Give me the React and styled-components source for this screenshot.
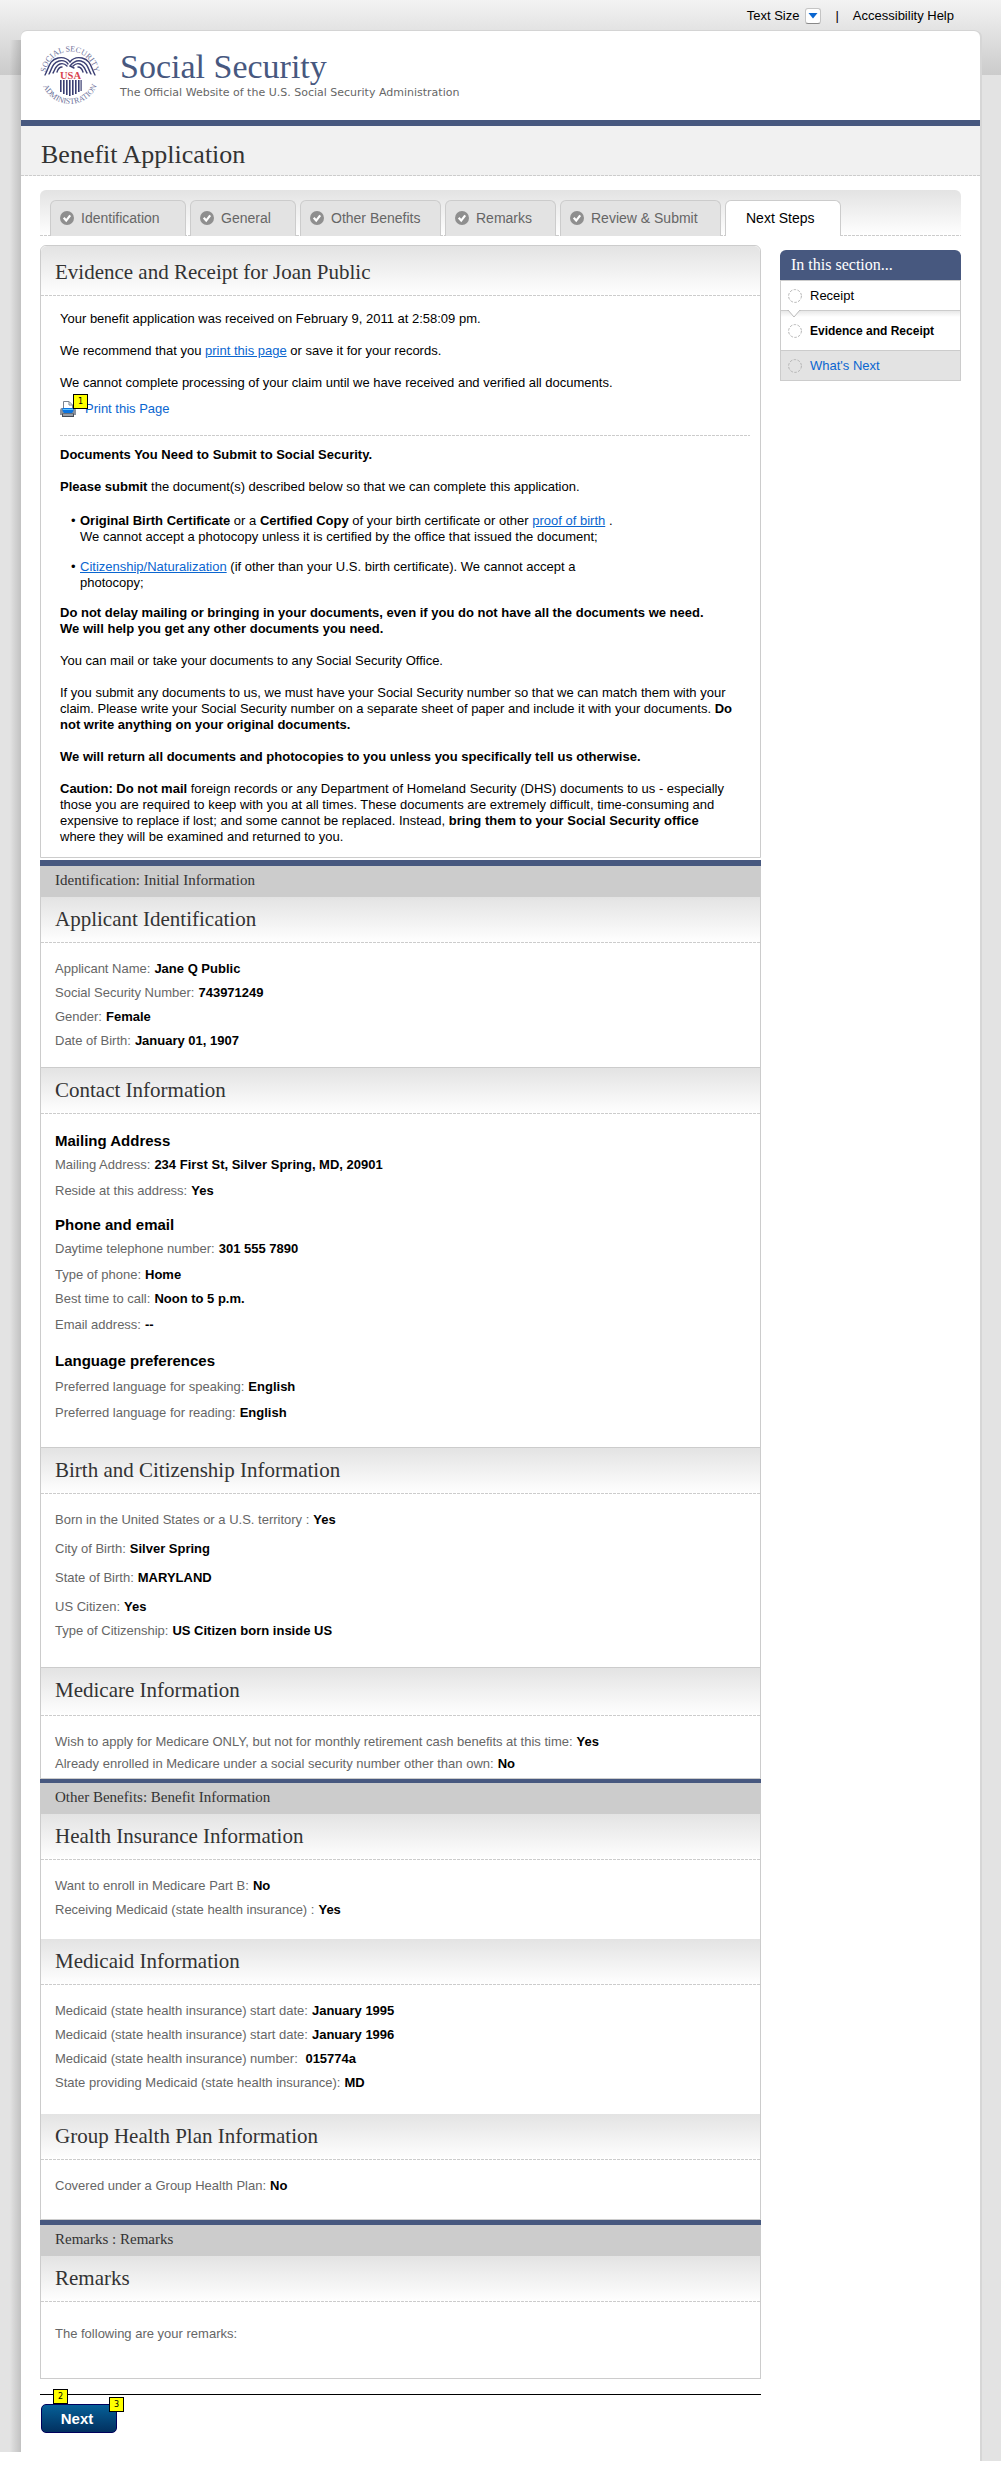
import React from "react";
import styled, { createGlobalStyle } from "styled-components";

const sans = `"Liberation Sans", Arial, sans-serif`;
const serif = `Georgia, "Liberation Serif", serif`;
const navy = "#47587f";
const line = "#cccccc";
const dashes = `repeating-linear-gradient(to right, ${line} 0 3px, transparent 3px 4px)`;

const Global = createGlobalStyle`
  * { box-sizing: border-box; }
  body { margin: 0; background: #fff; color: #000; font: 13px/16px ${sans}; }
  h1, h2, h3, h4, p, ul, dl, dd { margin: 0; padding: 0; font-weight: normal; }
  a { color: #0a66d0; }
`;

const Page = styled.div`
  margin-right: 7px;
  background: linear-gradient(#f3f3f3, #cbcbcb) top / 100% 75px no-repeat, #e3e3e3;
`;

const TopBar = styled.nav`
  display: flex;
  justify-content: flex-end;
  align-items: center;
  height: 31px;
  padding-right: 47px;
`;

const TopLink = styled.a`
  color: #000;
  text-decoration: none;
`;

const SizeButton = styled.button`
  display: grid;
  place-items: center;
  width: 16px;
  height: 16px;
  margin-left: 6px;
  padding: 0;
  border: 1px solid #c4c4c4;
  border-bottom-color: #888;
  border-radius: 3px;
  background: #fff;
`;

const Divider = styled.span`
  margin: 0 14px;
`;

const Frame = styled.div`
  display: grid;
  grid-template-columns: 21px minmax(0, 1fr) 21px;
`;

const LeftEdge = styled.div`
  display: flex;
  flex-direction: column;
  padding-top: 9px;
`;

const Shade = styled.div`
  flex: 1;
  background: linear-gradient(to right, transparent 10px, rgba(0, 0, 0, 0.03) 12px, rgba(0, 0, 0, 0.15));
`;

const LeftFoot = styled.div`
  height: 9px;
  background: #fff;
`;

const Card = styled.div`
  background: #fff;
  border-radius: 6px 6px 0 0;
  box-shadow: 0 -1px 0 #d4d4d4, 2px 0 0 #d6d6d6;
  padding-bottom: 28px;
`;

const Banner = styled.header`
  display: flex;
  align-items: flex-start;
  gap: 20px;
  height: 95px;
  padding: 13px 19px 0;
  border-bottom: 6px solid ${navy};
`;

const Brand = styled.div`
  padding-top: 5px;
`;

const BrandName = styled.div`
  color: ${navy};
  font: 34px/36px ${serif};
`;

const Tagline = styled.p`
  color: #666;
  font: 11px/16px Verdana, "DejaVu Sans", sans-serif;
`;

const TitleBand = styled.div`
  padding: 14px 19px 6px 20px;
  background: ${dashes} bottom / 100% 1px no-repeat, #f1f1f1;
`;

const PageTitle = styled.h1`
  color: #333;
  font: 26px/30px ${serif};
`;

const Content = styled.div`
  padding: 14px 19px 0;
`;

const Tabs = styled.nav`
  display: flex;
  gap: 4px;
  padding: 10px 10px 0;
  border-radius: 6px 6px 0 0;
  background: ${dashes} bottom / 100% 1px no-repeat, linear-gradient(#e3e3e3, #fff);
`;

const Tab = styled.a`
  display: flex;
  align-items: center;
  gap: 7px;
  flex: 0 1 ${(p) => p.$width}px;
  height: 36px;
  padding: 0 0 2px ${(p) => (p.$current ? 20 : 9)}px;
  border: 1px solid ${line};
  border-bottom: 0;
  border-radius: 6px 6px 0 0;
  background: ${(p) => (p.$current ? "#fff" : "#e3e3e3")};
  color: ${(p) => (p.$current ? "#000" : "#666")};
  font-size: 14px;
  text-decoration: none;
  white-space: nowrap;
`;

const Columns = styled.div`
  display: grid;
  grid-template-columns: minmax(0, 1fr) 181px;
  align-items: start;
  gap: 19px;
  padding-top: 9px;
`;

const Panel = styled.section`
  border: 1px solid ${line};
  border-width: ${(p) => (p.$first ? "1px" : p.$open ? "0 1px" : "0 1px 1px")};
  border-radius: ${(p) => (p.$first ? "6px 6px 0 0" : "0")};
  margin-bottom: ${(p) => (p.$first ? 2 : 0)}px;
`;

const PanelHead = styled.div`
  padding: ${(p) => p.$top || 10}px 14px ${(p) => p.$bottom || 12}px;
  border-radius: inherit;
  background: ${dashes} bottom / 100% 1px no-repeat, linear-gradient(#e3e3e3, #fff);
`;

const PanelTitle = styled.h2`
  color: #333;
  font: 21px/24px ${serif};
`;

const Stage = styled.div`
  padding: 6px 15px 9px;
  border-top: ${(p) => p.$bar}px solid ${navy};
  background: ${line};
  color: #333;
  font: 15px/16px ${serif};
`;

const Letter = styled.div`
  display: flex;
  flex-direction: column;
  gap: 16px;
  padding: 15px 10px 12px 19px;
`;

const PrintRow = styled.div`
  position: relative;
  display: flex;
  align-items: center;
  gap: 9px;
  margin-top: -6px;
  padding-bottom: 19px;
  background: ${dashes} bottom / 100% 1px no-repeat;

  & + * { margin-top: -5px; }
`;

const PlainLink = styled.a`
  text-decoration: none;
`;

const Bullets = styled.ul`
  display: flex;
  flex-direction: column;
  gap: 14px;
  margin: 2px 0 -2px;
  list-style: none;
`;

const Bullet = styled.li`
  display: flex;
  gap: 4px;
  padding-left: 11px;

  &::before { content: "•"; width: 5px; }
`;

const Fields = styled.dl`
  display: flex;
  flex-direction: column;
  padding: ${(p) => p.$top || 18}px 14px ${(p) => p.$bottom}px;
`;

const Field = styled.div`
  display: flex;
  gap: 4px;
  margin-bottom: ${(p) => p.$gap}px;

  dt { color: #666; }
  dd { font-weight: bold; }
`;

const SubHead = styled.h3`
  margin: 0 0 ${(p) => p.$gap}px;
  font: bold 15px/16px ${sans};
`;

const Side = styled.nav`
  margin-top: 5px;
`;

const SideHead = styled.h2`
  padding: 5px 11px;
  border-radius: 6px 6px 0 0;
  background: ${navy};
  color: #fff;
  font: 16px/20px ${serif};
`;

const SideItem = styled.a`
  position: relative;
  display: flex;
  align-items: center;
  gap: 8px;
  height: ${(p) => (p.$current ? 40 : 30)}px;
  padding-left: 7px;
  border: 1px solid ${line};
  border-bottom: 0;
  background: ${(p) =>
    p.$current ? "linear-gradient(#e8e8e8, #fff 6px)" : p.$later ? "#e3e3e3" : "#fff"};
  color: ${(p) => (p.$later ? "#0a66d0" : "#000")};
  font-weight: ${(p) => (p.$current ? "bold" : "normal")};
  font-size: ${(p) => (p.$current ? 12 : 13)}px;
  text-decoration: none;
  white-space: nowrap;

  &:last-child { height: 31px; border-bottom: 1px solid ${line}; }
`;

const Notch = styled.svg`
  position: absolute;
  top: -1px;
  left: 6px;
`;

const Actions = styled.div`
  margin-top: 15px;
  padding: 9px 1px 0;
  border-top: 1px solid #000;
`;

const NextWrap = styled.div`
  position: relative;
  display: inline-block;
`;

const NextButton = styled.button`
  display: block;
  width: 76px;
  height: 29px;
  padding: 0 4px 0 0;
  border: 1px solid #00005c;
  border-radius: 5px;
  background: linear-gradient(#066098, #02305f);
  color: #fff;
  font: bold 15px/24px ${sans};
`;

const Note = styled.span`
  position: absolute;
  top: ${(p) => p.$top}px;
  left: ${(p) => p.$left}px;
  width: 15px;
  height: 15px;
  border: 1px solid #000;
  background: #ff0;
  color: #000;
  font: 8px/13px "DejaVu Sans", sans-serif;
  text-align: center;
`;

const SealArt = styled.svg`
  overflow: visible;
`;

const Seal = () => (
  <SealArt width="60" height="61" viewBox="0 0 60 61" role="img" aria-label="Social Security Administration seal">
    <defs>
      <path id="sealTop" d="M5.400 32 A24.600 24.600 0 0 1 54.600 32" />
      <path id="sealBottom" d="M.700 30.500 A29.300 29.300 0 0 0 59.300 30.500" />
    </defs>
    <g fill="#6d7199" fontFamily='"Liberation Serif", serif' fontSize="8">
      <text><textPath href="#sealTop" startOffset="50%" textAnchor="middle">SOCIAL SECURITY</textPath></text>
      <text><textPath href="#sealBottom" startOffset="50%" textAnchor="middle">ADMINISTRATION</textPath></text>
    </g>
    <g fill="none" stroke="#3b3f73" strokeWidth="1.4" strokeLinecap="round">
      <path d="M5 31 C9 24 9 16 18 14 C23 13 27 14 30 18 C33 14 37 13 42 14 C51 16 51 24 55 31" />
      <path d="M9 30 C12 25 12 19 19 17 C23 16 26 17 28 20" />
      <path d="M13 29 C15 26 15 22 20 20 C23 19 25 20 27 22" />
      <path d="M17 28 C18 25 19 23 22 23" />
      <path d="M51 30 C48 25 48 19 41 17 C37 16 34 17 30 22 L34 24" />
      <path d="M47 29 C45 26 45 22 40 20 C37 19 35 20 33 22" />
      <path d="M43 28 C42 25 41 23 38 23" />
    </g>
    <text x="30.500" y="34.500" textAnchor="middle" fill="#d8434e" fontFamily='"Liberation Serif", serif' fontWeight="bold" fontSize="10.500">USA</text>
    <g fill="#3b3f73">
      {[20, 23, 26, 29, 32, 35, 38].map((x, i) => (
        <rect key={x} x={x} y="36" width="1.600" height={[12, 14, 15, 16, 15, 14, 12][i]} />
      ))}
      <rect x="40.500" y="36" width="1.200" height="11" />
    </g>
  </SealArt>
);

const Check = () => (
  <svg width="14" height="14" viewBox="0 0 14 14" aria-hidden="true">
    <circle cx="7" cy="7" r="7" fill="#8f8f8f" />
    <path d="M3.700 6.800 L6.200 9.600 L10.200 4.300" fill="none" stroke="#fff" strokeWidth="2.200" />
  </svg>
);

const Ring = () => (
  <svg width="14" height="14" viewBox="0 0 14 14" aria-hidden="true">
    <circle cx="7" cy="7" r="6.400" fill="none" stroke="#b4b4b4" strokeDasharray="2.600 1.400" />
  </svg>
);

const Printer = () => (
  <svg width="16" height="16" viewBox="0 0 16 16" aria-hidden="true">
    <path d="M3.500 8 V.500 H9 L12.500 4 V8 Z" fill="#fff" stroke="#7b8490" />
    <path d="M9 .500 V4 H12.500" fill="none" stroke="#7b8490" />
    <path d="M1 7 H15 L16 9 V14 H0 V9 Z" fill="#8a929e" />
    <path d="M2.500 7 H13.500 V10 L12 12 H4 L2.500 10 Z" fill="#0a74e0" />
    <path d="M3 8 H13 V9 H3 Z" fill="#5fc4ff" />
    <path d="M2 12.500 H14 V16 H2 Z" fill="#444c58" />
    <path d="M3 13.500 H13 V14.500 H3 Z" fill="#e8ecf2" />
  </svg>
);

const Head = ({ children, ...rest }) => (
  <PanelHead {...rest}>
    <PanelTitle>{children}</PanelTitle>
  </PanelHead>
);

const Rows = ({ items, gap = 8 }) =>
  items.map(([label, value, own], i) => (
    <Field key={label + value} $gap={i === items.length - 1 ? 0 : own ?? gap}>
      <dt>{label}</dt>
      <dd>{value}</dd>
    </Field>
  ));

const tabs = [
  ["Identification", 136],
  ["General", 106],
  ["Other Benefits", 141],
  ["Remarks", 111],
  ["Review & Submit", 161],
];

const contact = [
  ["Mailing Address", 8, 18, [
    ["Mailing Address:", "234 First St, Silver Spring, MD, 20901"],
    ["Reside at this address:", "Yes"],
  ]],
  ["Phone and email", 8, 20, [
    ["Daytime telephone number:", "301 555 7890"],
    ["Type of phone:", "Home", 8],
    ["Best time to call:", "Noon to 5 p.m."],
    ["Email address:", "--"],
  ]],
  ["Language preferences", 10, 0, [
    ["Preferred language for speaking:", "English"],
    ["Preferred language for reading:", "English"],
  ]],
];

const ContactGroup = styled.div`
  margin-bottom: ${(p) => p.$after}px;
`;

const ContactBody = styled.div`
  padding: 19px 14px 26px;
`;

export default function App() {
  return (
    <>
      <Global />
      <Page>
        <TopBar>
          <TopLink href="#size">Text Size</TopLink>
          <SizeButton type="button" aria-label="Change text size">
            <svg width="10" height="6" viewBox="0 0 10 6"><path d="M.500 0 H9.500 L5 5.500 Z" fill="#0a66d0" /></svg>
          </SizeButton>
          <Divider>|</Divider>
          <TopLink href="#help">Accessibility Help</TopLink>
        </TopBar>
        <Frame>
          <LeftEdge>
            <Shade />
            <LeftFoot />
          </LeftEdge>
          <Card>
            <Banner>
              <Seal />
              <Brand>
                <BrandName>Social Security</BrandName>
                <Tagline>The Official Website of the U.S. Social Security Administration</Tagline>
              </Brand>
            </Banner>
            <TitleBand>
              <PageTitle>Benefit Application</PageTitle>
            </TitleBand>
            <Content>
              <Tabs>
                {tabs.map(([name, width]) => (
                  <Tab key={name} href="#tab" $width={width}>
                    <Check />
                    {name}
                  </Tab>
                ))}
                <Tab href="#next-steps" $width={116} $current>Next Steps</Tab>
              </Tabs>
              <Columns>
                <main>
                  <Panel $first>
                    <Head $top={14}>Evidence and Receipt for Joan Public</Head>
                    <Letter>
                      <p>Your benefit application was received on February 9, 2011 at 2:58:09 pm.</p>
                      <p>We recommend that you <a href="#print">print this page</a> or save it for your records.</p>
                      <p>We cannot complete processing of your claim until we have received and verified all documents.</p>
                      <PrintRow>
                        <Printer />
                        <PlainLink href="#print">Print this Page</PlainLink>
                        <Note $top={-7} $left={13}>1</Note>
                      </PrintRow>
                      <p><b>Documents You Need to Submit to Social Security.</b></p>
                      <p><b>Please submit</b> the document(s) described below so that we can complete this application.</p>
                      <Bullets>
                        <Bullet>
                          <p>
                            <b>Original Birth Certificate</b> or a <b>Certified Copy</b> of your birth certificate or other{" "}
                            <a href="#proof">proof of birth</a> .<br />
                            We cannot accept a photocopy unless it is certified by the office that issued the document;
                          </p>
                        </Bullet>
                        <Bullet>
                          <p>
                            <a href="#citizenship">Citizenship/Naturalization</a> (if other than your U.S. birth certificate). We cannot accept a<br />
                            photocopy;
                          </p>
                        </Bullet>
                      </Bullets>
                      <p>
                        <b>
                          Do not delay mailing or bringing in your documents, even if you do not have all the documents we need.<br />
                          We will help you get any other documents you need.
                        </b>
                      </p>
                      <p>You can mail or take your documents to any Social Security Office.</p>
                      <p>
                        If you submit any documents to us, we must have your Social Security number so that we can match them with your<br />
                        claim. Please write your Social Security number on a separate sheet of paper and include it with your documents. <b>Do<br />
                        not write anything on your original documents.</b>
                      </p>
                      <p><b>We will return all documents and photocopies to you unless you specifically tell us otherwise.</b></p>
                      <p>
                        <b>Caution: Do not mail</b> foreign records or any Department of Homeland Security (DHS) documents to us - especially<br />
                        those you are required to keep with you at all times. These documents are extremely difficult, time-consuming and<br />
                        expensive to replace if lost; and some cannot be replaced. Instead, <b>bring them to your Social Security office</b><br />
                        where they will be examined and returned to you.
                      </p>
                    </Letter>
                  </Panel>

                  <Stage $bar={6}>Identification: Initial Information</Stage>
                  <Panel>
                    <Head>Applicant Identification</Head>
                    <Fields $bottom={18}>
                      <Rows items={[
                        ["Applicant Name:", "Jane Q Public"],
                        ["Social Security Number:", "743971249"],
                        ["Gender:", "Female"],
                        ["Date of Birth:", "January 01, 1907"],
                      ]} />
                    </Fields>
                  </Panel>
                  <Panel>
                    <Head>Contact Information</Head>
                    <ContactBody>
                      {contact.map(([title, gap, after, items]) => (
                        <ContactGroup key={title} $after={after}>
                          <SubHead $gap={gap}>{title}</SubHead>
                          <dl><Rows gap={10} items={items} /></dl>
                        </ContactGroup>
                      ))}
                    </ContactBody>
                  </Panel>
                  <Panel>
                    <Head>Birth and Citizenship Information</Head>
                    <Fields $bottom={28}>
                      <Rows gap={13} items={[
                        ["Born in the United States or a U.S. territory :", "Yes"],
                        ["City of Birth:", "Silver Spring"],
                        ["State of Birth:", "MARYLAND"],
                        ["US Citizen:", "Yes", 8],
                        ["Type of Citizenship:", "US Citizen born inside US"],
                      ]} />
                    </Fields>
                  </Panel>
                  <Panel>
                    <Head $bottom={14}>Medicare Information</Head>
                    <Fields $bottom={6}>
                      <Rows gap={6} items={[
                        ["Wish to apply for Medicare ONLY, but not for monthly retirement cash benefits at this time:", "Yes"],
                        ["Already enrolled in Medicare under a social security number other than own:", "No"],
                      ]} />
                    </Fields>
                  </Panel>

                  <Stage $bar={4}>Other Benefits: Benefit Information</Stage>
                  <Panel $open>
                    <Head>Health Insurance Information</Head>
                    <Fields $bottom={21}>
                      <Rows items={[
                        ["Want to enroll in Medicare Part B:", "No"],
                        ["Receiving Medicaid (state health insurance) :", "Yes"],
                      ]} />
                    </Fields>
                  </Panel>
                  <Panel $open>
                    <Head>Medicaid Information</Head>
                    <Fields $bottom={23}>
                      <Rows items={[
                        ["Medicaid (state health insurance) start date:", "January 1995"],
                        ["Medicaid (state health insurance) start date:", "January 1996"],
                        ["Medicaid (state health insurance) number:", "\u00a0015774a"],
                        ["State providing Medicaid (state health insurance):", "MD"],
                      ]} />
                    </Fields>
                  </Panel>
                  <Panel>
                    <Head>Group Health Plan Information</Head>
                    <Fields $bottom={25}>
                      <Rows items={[["Covered under a Group Health Plan:", "No"]]} />
                    </Fields>
                  </Panel>

                  <Stage $bar={5}>Remarks : Remarks</Stage>
                  <Panel>
                    <Head>Remarks</Head>
                    <Fields $top={24} $bottom={36}>
                      <Rows items={[["The following are your remarks:", ""]]} />
                    </Fields>
                  </Panel>

                  <Actions>
                    <NextWrap>
                      <NextButton type="button">Next</NextButton>
                      <Note $top={-15} $left={12}>2</Note>
                      <Note $top={-7} $left={68}>3</Note>
                    </NextWrap>
                  </Actions>
                </main>
                <Side>
                  <SideHead>In this section...</SideHead>
                  <SideItem href="#receipt"><Ring />Receipt</SideItem>
                  <SideItem href="#evidence" $current>
                    <Notch width="14" height="8" viewBox="0 0 14 8" aria-hidden="true">
                      <path d="M0 0 H1 L7 7 L13 0 H14" fill="#fff" stroke="#bbb" />
                    </Notch>
                    <Ring />
                    Evidence and Receipt
                  </SideItem>
                  <SideItem href="#whats-next" $later><Ring />What's Next</SideItem>
                </Side>
              </Columns>
            </Content>
          </Card>
        </Frame>
      </Page>
    </>
  );
}
